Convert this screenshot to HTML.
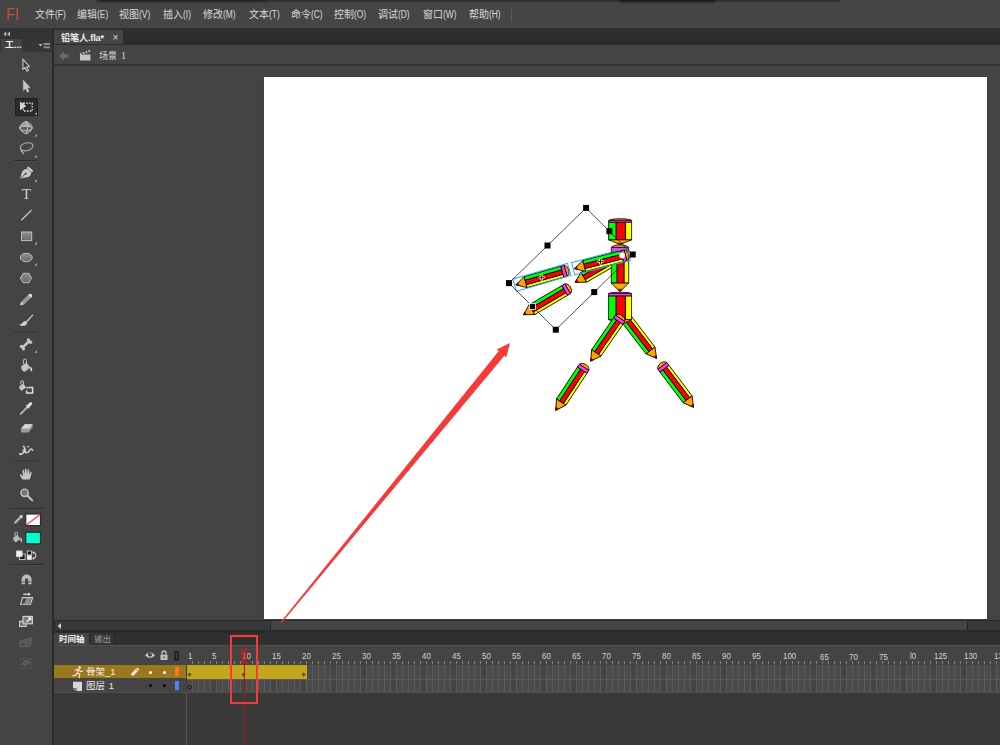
<!DOCTYPE html>
<html lang="zh-CN"><head><meta charset="utf-8"><title>铅笔人.fla</title>
<style>
html,body{margin:0;padding:0;}
body{width:1000px;height:745px;overflow:hidden;background:#444;position:relative;font-family:"Liberation Sans", "Noto Sans CJK SC", sans-serif;font-size:10px;color:#d6d6d6;}
.abs{position:absolute;}
.menu{position:absolute;left:0;top:0;width:1000px;height:29px;background:#454545;}
.menu span.mi{position:absolute;top:8px;height:14px;line-height:14px;font-size:10px;color:#dadada;white-space:nowrap;letter-spacing:0px;}
.menu span.mi i{font-style:normal;font-size:10px;display:inline-block;transform:scaleX(.84);transform-origin:0 50%;}
.fl{position:absolute;left:6px;top:4.9px;font-size:16.5px;line-height:18px;color:#c2512f;letter-spacing:0.3px;transform:scaleX(.9);transform-origin:0 0;}
.tabbar{position:absolute;left:54px;top:29px;width:946px;height:16px;background:linear-gradient(#2a2a2a 0,#2a2a2a 1px,#353535 1px,#353535 2px,#2d2d2d 2px,#2d2d2d 14px,#262626 14px);}
.doctab{position:absolute;left:54px;top:30px;width:69px;height:14px;background:#454545;}
.doctab .t{position:absolute;left:7px;top:1.8px;font-size:9.2px;letter-spacing:-0.2px;line-height:12px;font-weight:bold;color:#f0f0f0;white-space:nowrap;}
.doctab .x{position:absolute;left:58.5px;top:0.6px;font-size:10px;line-height:13px;color:#ddd;}
.scenebar{position:absolute;left:54px;top:45px;width:946px;height:19px;background:#444;}
.scenetxt{position:absolute;left:99px;top:49px;font-size:9px;line-height:13px;color:#dcdcdc;white-space:nowrap;}
.hline{position:absolute;background:#2b2b2b;}
.tools{position:absolute;left:0;top:29px;width:52px;height:716px;background:#444;}
.stage{position:absolute;left:264px;top:77px;width:723px;height:542px;background:#fff;box-shadow:0 0 1px #333;}
.tl-tabs{position:absolute;left:54px;top:633px;width:946px;height:13px;background:#2f2f2f;}
.tltab{position:absolute;top:633px;height:13px;font-size:8.5px;line-height:13px;white-space:nowrap;}
.layers{position:absolute;}
.num{position:absolute;top:650px;font-size:9.6px;line-height:11px;color:#d2d2d2;white-space:nowrap;transform:scaleX(.82);transform-origin:0 0;}
.lname{position:absolute;font-size:9.5px;line-height:13px;color:#f0f0f0;white-space:nowrap;}
</style></head>
<body>
<div class="menu">
<div class="abs" style="left:100px;top:0;width:740px;height:3px;background:linear-gradient(rgba(30,30,30,.75),rgba(30,30,30,0));"></div>
<div class="abs" style="left:620px;top:0;width:95px;height:4px;background:linear-gradient(rgba(25,25,25,.9),rgba(25,25,25,0));"></div>
<div class="abs" style="left:96px;top:0;width:170px;height:4px;background:linear-gradient(rgba(28,28,28,.5),rgba(28,28,28,0));"></div>
<div class="fl">Fl</div>
<span class="mi" style="left:35px;top:8px">文件<i>(F)</i></span>
<span class="mi" style="left:77px;top:8px">编辑<i>(E)</i></span>
<span class="mi" style="left:119px;top:8px">视图<i>(V)</i></span>
<span class="mi" style="left:163px;top:8px">插入<i>(I)</i></span>
<span class="mi" style="left:203px;top:8px">修改<i>(M)</i></span>
<span class="mi" style="left:249px;top:8px">文本<i>(T)</i></span>
<span class="mi" style="left:291px;top:8px">命令<i>(C)</i></span>
<span class="mi" style="left:334px;top:8px">控制<i>(O)</i></span>
<span class="mi" style="left:378px;top:8px">调试<i>(D)</i></span>
<span class="mi" style="left:423px;top:8px">窗口<i>(W)</i></span>
<span class="mi" style="left:469px;top:8px">帮助<i>(H)</i></span>
<div class="abs" style="left:511px;top:7px;width:1px;height:15px;background:#5a5a5a;"></div>
</div>
<div class="hline" style="left:0;top:28px;width:1000px;height:1px;background:#333"></div>
<div class="tabbar"></div>
<div class="doctab"><span class="t">铅笔人.fla*</span><span class="x">×</span></div>
<div class="hline" style="left:54px;top:44px;width:946px;height:1px;background:#2c2c2c"></div>
<div class="scenebar"></div>
<svg class="abs" style="left:58px;top:50px" width="12" height="12" viewBox="0 0 12 12"><path d="M1 6 L6 1.5 L6 4.3 L10.5 4.3 L10.5 7.7 L6 7.7 L6 10.5 Z" fill="#6b6b6b"/></svg>
<svg class="abs" style="left:78px;top:48px" width="14" height="14" viewBox="0 0 14 14"><rect x="2" y="6.5" width="10.5" height="6" fill="#c4c4c4"/><path d="M1.6 5.6 L11.8 2.0 L12.4 3.6 L2.2 7.2 Z" fill="#c4c4c4"/><path d="M3.6 4.6 l1.3 1.7 M6.3 3.6 l1.3 1.7 M9 2.7 l1.3 1.7" stroke="#444" stroke-width="1.1"/></svg>
<div class="scenetxt">场景&nbsp;<span style="font-family:&quot;Liberation Serif&quot;,serif;font-size:10px;margin-left:1.5px">1</span></div>
<div class="hline" style="left:54px;top:64px;width:946px;height:2px;background:linear-gradient(#303030,#3a3a3a)"></div>
<div class="stage"></div>
<div class="abs" style="left:54px;top:620px;width:946px;height:11px;background:#2a2a2a"></div>
<div class="abs" style="left:55px;top:621px;width:945px;height:9px;background:#383838"></div>
<div class="abs" style="left:270px;top:621px;width:698px;height:9px;background:#454545;border-left:1px solid #222;border-right:1px solid #222;box-sizing:border-box"></div>
<svg class="abs" style="left:56px;top:622px" width="8" height="8" viewBox="0 0 8 8"><path d="M1.5 4 L5 1 L5 7 Z" fill="#cfcfcf"/></svg>
<div class="abs" style="left:54px;top:631px;width:946px;height:2px;background:#2a2a2a"></div>
<div class="tools"></div>
<div class="abs" style="left:52px;top:29px;width:2px;height:716px;background:#2b2b2b"></div>
<div class="abs" style="left:0;top:29px;width:52px;height:10px;background:#333"></div>
<div class="abs" style="left:0;top:39px;width:52px;height:13px;background:#353535"></div>
<div class="abs" style="left:1px;top:39px;width:21px;height:13px;background:#444"></div>
<div class="abs" style="left:5px;top:40px;font-size:9px;line-height:11px;font-weight:bold;color:#eee;white-space:nowrap">工...</div>
<svg class="abs" style="left:3px;top:31px" width="8" height="6" viewBox="0 0 8 6"><path d="M0.5 3 L3.3 0.6 L3.3 5.4 Z M4.2 3 L7 0.6 L7 5.4 Z" fill="#bdbdbd"/></svg>
<svg class="abs" style="left:38px;top:42px" width="13" height="8" viewBox="0 0 13 8"><path d="M0.5 2 L4.5 2 L2.5 4.6 Z" fill="#bbb"/><rect x="5.5" y="1" width="6.5" height="2" fill="#8a8a8a"/><rect x="5.5" y="4.3" width="6.5" height="2" fill="#8a8a8a"/></svg>
<svg class="abs" style="left:0;top:0" width="54" height="745" viewBox="0 0 54 745">
<path d="M22.9 59.2 l0 10.2 l2.2 -2.0 l1.7 3.8 l1.6 -0.8 l-1.6 -3.6 l2.7 -0.2 Z" fill="#3a3a3a" stroke="#c6c6c6" stroke-width="1.1" stroke-linejoin="round"/>
<path d="M23.4 80.2 l0 10.2 l2.2 -2.0 l1.7 3.8 l1.6 -0.8 l-1.6 -3.6 l2.7 -0.2 Z" fill="#c6c6c6" stroke="#c6c6c6" stroke-width="0.6" stroke-linejoin="round"/>
<rect x="15.5" y="98.5" width="22" height="17" fill="#2b2b2b" stroke="#1f1f1f" stroke-width="1"/>
<rect x="23.4" y="103.2" width="8.8" height="7.8" fill="none" stroke="#e4e4e4" stroke-width="1.3" stroke-dasharray="1.6 1.3"/>
<path d="M20 101.6 l0 8.6 l6.4 -4.2 Z" fill="#d4d4d4"/>
<path d="M37.0 114.8 l0 -2.6 l-2.6 2.6 Z" fill="#b0b0b0"/>
<path d="M26 121.2 Q31.4 123.4 32.6 127.6 Q31.4 131.8 26 134 Q20.6 131.8 19.4 127.6 Q20.6 123.4 26 121.2 Z" fill="#5e5e5e" stroke="#c6c6c6" stroke-width="1"/>
<path d="M19.6 127 Q20.8 123.4 26 121.4 Q31.2 123.4 32.4 127 Z" fill="#9d9d9d"/>
<ellipse cx="26" cy="128.4" rx="6.2" ry="2.3" fill="none" stroke="#c6c6c6" stroke-width="0.9"/>
<path d="M26 121.4 Q29.4 127.6 26 133.8" fill="none" stroke="#c6c6c6" stroke-width="0.9"/>
<path d="M37.0 136.6 l0 -2.6 l-2.6 2.6 Z" fill="#b0b0b0"/>
<ellipse cx="26.6" cy="146.8" rx="6.4" ry="3.9" transform="rotate(-14 26.6 146.8)" fill="none" stroke="#b0b0b0" stroke-width="1.1"/>
<path d="M21.4 149.6 q-0.8 1.6 0.8 2.2 q1.6 0.4 0.8 2.4" fill="none" stroke="#bdbdbd" stroke-width="1.1"/>
<path d="M37.0 157.6 l0 -2.6 l-2.6 2.6 Z" fill="#b0b0b0"/>
<path d="M14 160.5 H38" stroke="#2c2c2c" stroke-width="1"/><path d="M14 161.5 H38" stroke="#4c4c4c" stroke-width="1"/>
<path d="M20.1 178.5 L22.2 171.4 Q24.6 168.4 27.4 168.8 L31.4 172.4 Q31.4 175.2 28.6 177 Z" fill="#c6c6c6"/>
<path d="M28.2 166.4 L33.3 170.8 L32 172.3 L26.9 167.9 Z" fill="#dcdcdc"/>
<circle cx="25.6" cy="173.8" r="1" fill="#333"/><path d="M20.4 178.2 L25.2 174.2" stroke="#444" stroke-width="0.7"/>
<path d="M37.0 181.8 l0 -2.6 l-2.6 2.6 Z" fill="#b0b0b0"/>
<text x="26.4" y="199" font-family="'Liberation Serif', serif" font-size="15.2" fill="#cfcfcf" text-anchor="middle">T</text>
<path d="M21.2 220.3 L31.6 210" stroke="#cacaca" stroke-width="1.2"/>
<linearGradient id="rg" x1="0" y1="0" x2="0" y2="1"><stop offset="0" stop-color="#8e8e8e"/><stop offset="1" stop-color="#6a6a6a"/></linearGradient>
<rect x="21.5" y="232" width="10.2" height="8.6" fill="url(#rg)" stroke="#bdbdbd" stroke-width="1"/>
<path d="M37.0 244.4 l0 -2.6 l-2.6 2.6 Z" fill="#b0b0b0"/>
<ellipse cx="26.3" cy="257.5" rx="6" ry="4.2" fill="url(#rg)" stroke="#bdbdbd" stroke-width="1"/>
<path d="M37.0 265.6 l0 -2.6 l-2.6 2.6 Z" fill="#b0b0b0"/>
<path d="M20.4 278 L23.2 273.3 L28.8 273.3 L31.6 278 L28.8 282.7 L23.2 282.7 Z" fill="url(#rg)" stroke="#bdbdbd" stroke-width="1"/>
<path d="M20 305.2 L21.2 301.8 L28.6 294.6 L31.4 297.4 L24 304.4 Z" fill="#9a9a9a"/>
<path d="M28.2 295 Q30.2 292.8 31.8 294.4 Q33.2 296 31.2 297.8 Z" fill="#dedede"/>
<path d="M20 305.2 L21.2 301.8 L23.6 304.2 Z" fill="#d8d8d8"/>
<path d="M26 321.6 L32.6 314.2 L33.4 315 L27 322.6 Z" fill="#cfcfcf"/>
<path d="M19.4 324.4 Q22.4 324 23.6 321.6 Q25.4 320.4 27 322 Q27.6 325.6 23.2 326 Q20.6 326 19.4 324.4 Z" fill="#cfcfcf"/>
<path d="M14 332.3 H38" stroke="#2c2c2c" stroke-width="1"/><path d="M14 333.3 H38" stroke="#4c4c4c" stroke-width="1"/>
<path d="M22.6 347.4 L29.2 341.2" stroke="#c6c6c6" stroke-width="2.6" stroke-linecap="round"/>
<circle cx="21.4" cy="346.4" r="1.7" fill="#c6c6c6"/><circle cx="23.4" cy="348.8" r="1.7" fill="#c6c6c6"/>
<circle cx="28.4" cy="340" r="1.7" fill="#c6c6c6"/><circle cx="30.6" cy="342.2" r="1.7" fill="#c6c6c6"/>
<path d="M37.0 352.8 l0 -2.6 l-2.6 2.6 Z" fill="#b0b0b0"/>
<path d="M21 366.6 L26.4 362.6 L30.2 367.8 L24.8 371.8 Q21.4 371.4 21 366.6 Z" fill="#c6c6c6"/>
<path d="M23.4 364 V360.6 a1.5 1.5 0 0 1 3 0 V364" fill="none" stroke="#c6c6c6" stroke-width="1"/>
<path d="M29.6 366.4 Q32.6 367 32.2 371.2 Q30.4 371.6 30.4 369.4 Z" fill="#dadada"/>
<path d="M19 386.4 L23.2 383.4 L26.2 387.4 L22 390.6 Q19.4 390 19 386.4 Z" fill="#c6c6c6"/>
<path d="M20.8 384.4 V382 a1.3 1.3 0 0 1 2.6 0 V384" fill="none" stroke="#c6c6c6" stroke-width="1"/>
<path d="M26.4 387 l1.6 1.6" stroke="#c6c6c6" stroke-width="1.4"/>
<path d="M28.4 387.4 H32.6 V393 H26.6 V390.6" fill="none" stroke="#e0e0e0" stroke-width="1.5"/>
<path d="M20.7 413.8 L27.4 407" stroke="#b4b4b4" stroke-width="1.9" stroke-linecap="round"/>
<path d="M26.3 405.2 L29.2 408.1" stroke="#d8d8d8" stroke-width="1.5"/>
<path d="M28.7 405.7 L30.7 403.7" stroke="#d8d8d8" stroke-width="3.1" stroke-linecap="round"/>
<path d="M21 428.6 L24.8 424.2 L32.6 424.2 L32.6 427.2 L28.6 432.4 L21 432.4 Z" fill="#9c9c9c"/>
<path d="M21 428.6 L24.8 424.2 L32.6 424.2 L28.8 428.6 Z" fill="#d8d8d8"/>
<path d="M19.6 454.2 Q23.6 454.2 24.6 450.6 Q25.6 446.6 22.6 446.2 M24.4 451.4 Q27.6 454.4 29.6 450.4 Q30.8 447.6 33 450.8" fill="none" stroke="#c6c6c6" stroke-width="1.6"/>
<circle cx="24.4" cy="450.6" r="1.5" fill="none" stroke="#e0e0e0" stroke-width="0.9"/><circle cx="20.2" cy="454" r="1" fill="#dcdcdc"/><circle cx="28" cy="446.6" r="0.9" fill="#cfcfcf"/>
<path d="M14 461.3 H38" stroke="#2c2c2c" stroke-width="1"/><path d="M14 462.3 H38" stroke="#4c4c4c" stroke-width="1"/>
<path d="M22.4 479.6 L20 475.4 Q19.8 474 21.2 474.4 L23 476.2 L22.4 470.4 Q23.2 469.2 23.9 470.4 L24.6 474.2 L25 469.2 Q25.9 468 26.6 469.2 L26.8 474.2 L27.8 469.8 Q28.8 468.8 29.3 470 L29 474.8 L30.4 472 Q31.6 471.2 31.6 472.6 L30.6 477.2 Q30.2 479 29.2 479.6 Z" fill="#c6c6c6"/>
<circle cx="24.6" cy="492.8" r="3.7" fill="#777" stroke="#c6c6c6" stroke-width="1.4"/>
<path d="M27.6 495.8 L32.2 500.4" stroke="#c6c6c6" stroke-width="2" stroke-linecap="round"/>
<path d="M9 508.6 H44" stroke="#2c2c2c" stroke-width="1"/><path d="M9 509.6 H44" stroke="#4c4c4c" stroke-width="1"/>
<path d="M13.8 523.8 L14.6 521.6 L19.6 516.6 L21.2 518.2 L16.2 523.2 Z" fill="#b4b4b4"/><path d="M19.4 516.2 Q21 514.2 22.4 515.6 Q23.6 517 21.6 518.6 Z" fill="#e0e0e0"/>
<rect x="25.7" y="514" width="14.8" height="11.6" fill="#fff" stroke="#2a2a2a" stroke-width="1.2"/>
<path d="M26.6 524.8 L39.8 514.8" stroke="#ff4040" stroke-width="1.1"/>
<path d="M13 537.8 L17.2 534.8 L20.4 539 L16 542.2 Q13.4 541.6 13 537.8 Z" fill="#b8b8b8"/>
<path d="M15 536 V533.4 a1.3 1.3 0 0 1 2.6 0 V535.6" fill="none" stroke="#b8b8b8" stroke-width="1"/>
<path d="M20 537.6 Q22.4 538.2 22 542 Q20.6 542.2 20.6 540.4 Z" fill="#d8d8d8"/>
<rect x="25.7" y="532.2" width="14.8" height="11.6" fill="#00ffcc" stroke="#2a2a2a" stroke-width="1.2"/>
<rect x="19.5" y="554" width="5.6" height="5.6" fill="#1a1a1a" stroke="#d0d0d0" stroke-width="0.9"/>
<rect x="16.5" y="551" width="5.6" height="5.6" fill="#f0f0f0" stroke="#d0d0d0" stroke-width="0.9"/>
<rect x="27.3" y="551" width="4" height="4" fill="#111" stroke="#ddd" stroke-width="0.8"/><rect x="27.3" y="555.6" width="4" height="4" fill="#f4f4f4" stroke="#ddd" stroke-width="0.8"/>
<path d="M33 552.6 Q36 552.6 35.6 555.6 Q36 558.4 33 558.4" fill="none" stroke="#d4d4d4" stroke-width="1.1"/><path d="M33.8 550.8 L32.2 552.6 L33.8 554.2 Z M33.8 556.8 L32.2 558.4 L33.8 560 Z" fill="#d4d4d4"/>
<path d="M9 564.5 H44" stroke="#2c2c2c" stroke-width="1"/><path d="M9 565.5 H44" stroke="#4c4c4c" stroke-width="1"/>
<path d="M21.6 584.2 V579.6 a5 5 0 0 1 10 0 V584.2 H28.2 V579.8 a1.6 1.6 0 0 0 -3.2 0 V584.2 Z" fill="#bcbcbc"/>
<path d="M21.6 582 H25 M28.2 582 H31.6" stroke="#444" stroke-width="0.9"/>
<path d="M20.6 604.2 L22.6 597.6 H32.6 L30.6 604.2 Z" fill="none" stroke="#cfcfcf" stroke-width="1.1"/><path d="M24 604 L26.6 598 H31.6 L29.6 604 Z" fill="#8c8c8c"/>
<path d="M23.2 594.2 H29.4" stroke="#e0e0e0" stroke-width="1.2"/><path d="M28.4 592.4 L30.8 594.2 L28.4 596 Z" fill="#e0e0e0"/>
<rect x="19.6" y="621.4" width="6.6" height="5" fill="#6a6a6a" stroke="#d4d4d4" stroke-width="1.1"/>
<rect x="23" y="616.4" width="9.4" height="7.4" fill="#7c7c7c" stroke="#d4d4d4" stroke-width="1.1"/>
<path d="M26.4 622 L30.6 618 M28 617.8 H30.8 V620.6" fill="none" stroke="#f0f0f0" stroke-width="1.1"/>
<path d="M20.2 646.6 V641 L31.8 637.4 L30.6 646.6 Z" fill="#555" stroke="#636363" stroke-width="0.9"/><rect x="20.6" y="642.6" width="5.4" height="3.8" fill="#4a4a4a" stroke="#6a6a6a" stroke-width="0.8"/>
<rect x="20.4" y="658.4" width="11.4" height="10" fill="none" stroke="#646464" stroke-width="0.9" stroke-dasharray="1.2 1.2"/>
<path d="M23 664.6 Q22.4 660.6 26.4 660.4 Q30 660.6 29.8 663 Q27.4 662.6 26.8 664.6 Q25.2 666.6 23 664.6 Z" fill="#555" stroke="#6e6e6e" stroke-width="0.9"/>
</svg>
<div class="abs" style="left:54px;top:633px;width:946px;height:112px;background:#393939"></div>
<div class="tl-tabs"></div>
<div class="abs" style="left:54px;top:633px;width:35px;height:13px;background:#444"></div>
<div class="abs" style="left:89px;top:633px;width:26px;height:12px;background:#343434;border-right:1px solid #282828;border-left:1px solid #282828;box-sizing:border-box"></div>
<div class="tltab" style="left:59px;color:#f2f2f2;font-weight:bold;">时间轴</div>
<div class="tltab" style="left:94px;color:#9a9a9a;">输出</div>
<div class="abs" style="left:54px;top:646px;width:946px;height:19px;background:#444"></div>
<div class="abs" style="left:54px;top:665px;width:133px;height:13px;background:#9b771d"></div>
<div class="abs" style="left:54px;top:678px;width:133px;height:14px;background:#454545"></div>
<div class="abs" style="left:187px;top:665px;width:813px;height:28px;background:#4b4b4b"></div>
<div class="abs" style="left:187px;top:665px;width:813px;height:27px;background:repeating-linear-gradient(90deg,rgba(0,0,0,0) 0,rgba(0,0,0,0) 5px,#5b5b5b 5px,#5b5b5b 6px)"></div>
<div class="abs" style="left:187px;top:665px;width:813px;height:27px;background:repeating-linear-gradient(90deg,rgba(0,0,0,0) 0,rgba(0,0,0,0) 24px,rgba(0,0,0,.09) 24px,rgba(0,0,0,.09) 29px,rgba(0,0,0,0) 29px,rgba(0,0,0,0) 30px)"></div>
<div class="abs" style="left:187px;top:679px;width:813px;height:1px;background:#5b5b5b"></div>
<div class="abs" style="left:54px;top:692px;width:946px;height:1px;background:#4e4e4e"></div>
<div class="abs" style="left:54px;top:645px;width:946px;height:1px;background:#505050"></div>
<div class="abs" style="left:187px;top:665px;width:120px;height:14px;background:#c3a520"></div>
<div class="abs" style="left:186px;top:646px;width:1px;height:19px;background:#4a4a4a"></div>
<div class="abs" style="left:186px;top:665px;width:1px;height:27px;background:#3c3c3c"></div>
<div class="abs" style="left:186px;top:692px;width:1px;height:53px;background:#575757"></div>
<svg class="abs" style="left:0;top:0" width="1000" height="745" viewBox="0 0 1000 745">
<path d="M192.5 661.5V663.5M198.5 661.5V663.5M204.5 661.5V663.5M210.5 661.5V663.5M216.5 661.5V663.5M222.5 661.5V663.5M228.5 661.5V663.5M234.5 661.5V663.5M240.5 661.5V663.5M246.5 661.5V663.5M252.5 661.5V663.5M258.5 661.5V663.5M264.5 661.5V663.5M270.5 661.5V663.5M276.5 661.5V663.5M282.5 661.5V663.5M288.5 661.5V663.5M294.5 661.5V663.5M300.5 661.5V663.5M306.5 661.5V663.5M312.5 661.5V663.5M318.5 661.5V663.5M324.5 661.5V663.5M330.5 661.5V663.5M336.5 661.5V663.5M342.5 661.5V663.5M348.5 661.5V663.5M354.5 661.5V663.5M360.5 661.5V663.5M366.5 661.5V663.5M372.5 661.5V663.5M378.5 661.5V663.5M384.5 661.5V663.5M390.5 661.5V663.5M396.5 661.5V663.5M402.5 661.5V663.5M408.5 661.5V663.5M414.5 661.5V663.5M420.5 661.5V663.5M426.5 661.5V663.5M432.5 661.5V663.5M438.5 661.5V663.5M444.5 661.5V663.5M450.5 661.5V663.5M456.5 661.5V663.5M462.5 661.5V663.5M468.5 661.5V663.5M474.5 661.5V663.5M480.5 661.5V663.5M486.5 661.5V663.5M492.5 661.5V663.5M498.5 661.5V663.5M504.5 661.5V663.5M510.5 661.5V663.5M516.5 661.5V663.5M522.5 661.5V663.5M528.5 661.5V663.5M534.5 661.5V663.5M540.5 661.5V663.5M546.5 661.5V663.5M552.5 661.5V663.5M558.5 661.5V663.5M564.5 661.5V663.5M570.5 661.5V663.5M576.5 661.5V663.5M582.5 661.5V663.5M588.5 661.5V663.5M594.5 661.5V663.5M600.5 661.5V663.5M606.5 661.5V663.5M612.5 661.5V663.5M618.5 661.5V663.5M624.5 661.5V663.5M630.5 661.5V663.5M636.5 661.5V663.5M642.5 661.5V663.5M648.5 661.5V663.5M654.5 661.5V663.5M660.5 661.5V663.5M666.5 661.5V663.5M672.5 661.5V663.5M678.5 661.5V663.5M684.5 661.5V663.5M690.5 661.5V663.5M696.5 661.5V663.5M702.5 661.5V663.5M708.5 661.5V663.5M714.5 661.5V663.5M720.5 661.5V663.5M726.5 661.5V663.5M732.5 661.5V663.5M738.5 661.5V663.5M744.5 661.5V663.5M750.5 661.5V663.5M756.5 661.5V663.5M762.5 661.5V663.5M768.5 661.5V663.5M774.5 661.5V663.5M780.5 661.5V663.5M786.5 661.5V663.5M792.5 661.5V663.5M798.5 661.5V663.5M804.5 661.5V663.5M810.5 661.5V663.5M816.5 661.5V663.5M822.5 661.5V663.5M828.5 661.5V663.5M834.5 661.5V663.5M840.5 661.5V663.5M846.5 661.5V663.5M852.5 661.5V663.5M858.5 661.5V663.5M864.5 661.5V663.5M870.5 661.5V663.5M876.5 661.5V663.5M882.5 661.5V663.5M888.5 661.5V663.5M894.5 661.5V663.5M900.5 661.5V663.5M906.5 661.5V663.5M912.5 661.5V663.5M918.5 661.5V663.5M924.5 661.5V663.5M930.5 661.5V663.5M936.5 661.5V663.5M942.5 661.5V663.5M948.5 661.5V663.5M954.5 661.5V663.5M960.5 661.5V663.5M966.5 661.5V663.5M972.5 661.5V663.5M978.5 661.5V663.5M984.5 661.5V663.5M990.5 661.5V663.5M996.5 661.5V663.5M1002.5 661.5V663.5" stroke="#9c9c9c" stroke-width="1" fill="none"/>
<path d="M189.5 672.4 l2 2.2 l-2 2.2 l-2 -2.2 Z" fill="#6b4a12"/>
<path d="M243.5 672.4 l2 2.2 l-2 2.2 l-2 -2.2 Z" fill="#6b4a12"/>
<path d="M303.6 672.4 l2 2.2 l-2 2.2 l-2 -2.2 Z" fill="#6b4a12"/>
<circle cx="189.6" cy="687.3" r="1.8" fill="none" stroke="#151515" stroke-width="1"/>
</svg>
<span class="num" style="left:187.5px">1</span>
<span class="num" style="left:211.5px">5</span>
<span class="num" style="left:241.5px">10</span>
<span class="num" style="left:271.5px">15</span>
<span class="num" style="left:301.5px">20</span>
<span class="num" style="left:331.5px">25</span>
<span class="num" style="left:361.5px">30</span>
<span class="num" style="left:391.5px">35</span>
<span class="num" style="left:421.5px">40</span>
<span class="num" style="left:451.5px">45</span>
<span class="num" style="left:481.5px">50</span>
<span class="num" style="left:511.5px">55</span>
<span class="num" style="left:541.5px">60</span>
<span class="num" style="left:571.5px">65</span>
<span class="num" style="left:601.5px">70</span>
<span class="num" style="left:631.5px">75</span>
<span class="num" style="left:661.5px">80</span>
<span class="num" style="left:691.5px">85</span>
<span class="num" style="left:721.5px">90</span>
<span class="num" style="left:751.5px">95</span>
<span class="num" style="left:783.2px">100</span>
<span class="num" style="left:819.5px;top:651px">65</span>
<span class="num" style="left:849.2px;top:651px">70</span>
<span class="num" style="left:879.2px;top:651px">75</span>
<span class="num" style="left:909.5px">l0</span>
<span class="num" style="left:934.0px">125</span>
<span class="num" style="left:963.8px">130</span>
<span class="num" style="left:994.3px">135</span>
<svg class="abs" style="left:140px;top:648px" width="46" height="14" viewBox="0 0 46 14"><path d="M5 7.3 Q10 1.2 15.2 7.3 Q10 12.6 5 7.3 Z" fill="#bdbdbd"/><path d="M6.6 7.3 Q10 3.6 13.6 7.3 Q10 10.6 6.6 7.3 Z" fill="#d8d8d8"/><circle cx="10.1" cy="6.6" r="2.1" fill="#3a3a3a"/><circle cx="10.9" cy="5.9" r="0.7" fill="#c8c8c8"/><rect x="20.5" y="6.7" width="7" height="5.3" fill="#c2c2c2"/><path d="M22 6.7 V5 a2 2 0 0 1 4 0 V6.7" fill="none" stroke="#c2c2c2" stroke-width="1.3"/><rect x="23.4" y="8.3" width="1.2" height="2" fill="#444"/><rect x="35" y="3.8" width="3" height="8" fill="none" stroke="#111" stroke-width="1.2"/></svg>
<svg class="abs" style="left:71px;top:665px" width="14" height="14" viewBox="0 0 14 14"><circle cx="8.6" cy="2.6" r="1.3" fill="#f4ead0"/><path d="M4.2 5.2 L7.6 4.4 L6.4 8 L8.8 9.6 L8.2 12.6 M6.4 8 L4.6 10.2 L2 10.8 M7.6 4.4 L9.6 6.6 L11.6 6.2" fill="none" stroke="#f4ead0" stroke-width="1.2" stroke-linecap="round" stroke-linejoin="round"/></svg>
<div class="lname" style="left:86px;top:665px;">骨架_1</div>
<svg class="abs" style="left:129px;top:666px" width="12" height="12" viewBox="0 0 12 12"><path d="M1.2 10.8 L2.2 7.6 L8.2 1.6 L10.4 3.8 L4.4 9.8 Z" fill="#efe6cf"/><path d="M7 2.8 L9.2 5" stroke="#9b771d" stroke-width="0.9"/><path d="M1.2 10.8 L2 8.6 L3.4 10 Z" fill="#5a4410"/></svg>
<div class="abs" style="left:148.5px;top:670.5px;width:3.2px;height:3.2px;border-radius:2px;background:#fff"></div>
<div class="abs" style="left:163px;top:670.5px;width:3.2px;height:3.2px;border-radius:2px;background:#fff"></div>
<div class="abs" style="left:175px;top:667px;width:4px;height:9px;background:#ff7a00"></div>
<svg class="abs" style="left:72px;top:681px" width="12" height="11" viewBox="0 0 12 11"><path d="M1 0.8 H10 V10 H4.6 V7.2 H1 Z" fill="#d8d8d8"/><path d="M1 7.8 H4 V10 Z" fill="#d8d8d8" opacity=".55"/></svg>
<div class="lname" style="left:86px;top:679px;color:#eaeaea">图层&nbsp;<span style="margin-left:1px">1</span></div>
<div class="abs" style="left:148.5px;top:684px;width:3.2px;height:3.2px;border-radius:2px;background:#0a0a0a"></div>
<div class="abs" style="left:163px;top:684px;width:3.2px;height:3.2px;border-radius:2px;background:#0a0a0a"></div>
<div class="abs" style="left:175px;top:681px;width:4px;height:9px;background:#4f80ff"></div>
<div class="abs" style="left:241px;top:648px;width:6px;height:16px;background:rgba(200,30,30,.55);border:1px solid #b02020;box-sizing:border-box"></div>
<div class="abs" style="left:243.5px;top:664px;width:1px;height:81px;background:#a81818"></div>
<div class="abs" style="left:230px;top:635px;width:28px;height:69px;border:2px solid #f23c3c;box-sizing:border-box"></div>
<svg class="abs" style="left:0;top:0" width="1000" height="745" viewBox="0 0 1000 745">
<g transform="translate(623.10 314.80) rotate(52.46)" stroke="#000" stroke-width="0.80" stroke-linejoin="round"><path d="M3.40 -5.42 C-1.12 -5.09 -1.12 5.09 3.40 5.42 Z" fill="#ffa500"/><rect x="3.20" y="-5.65" width="3.60" height="11.30" fill="#ff33ff"/><rect x="6.80" y="-5.65" width="38.19" height="3.05" fill="#ffff00"/><rect x="6.80" y="-2.60" width="38.19" height="4.63" fill="#ff0000"/><rect x="6.80" y="2.03" width="38.19" height="3.62" fill="#00ff00"/><path d="M44.99 -5.65 L54.98 0 L44.99 5.65 Z" fill="#ffa500"/><path d="M52.28 -1.53 L54.98 0 L52.28 1.53 Z" fill="#cc0000" stroke-width="0.48"/></g>
<g transform="translate(620.05 292.20) rotate(90.00)" stroke="#000" stroke-width="0.80" stroke-linejoin="round"><path d="M1.37 -11.04 C-0.41 -10.35 -0.41 10.35 1.37 11.04 Z" fill="#ffa500"/><rect x="1.17" y="-11.50" width="2.73" height="23.00" fill="#ff33ff"/><rect x="3.90" y="-11.50" width="23.43" height="6.21" fill="#ffff00"/><rect x="3.90" y="-5.29" width="23.43" height="9.43" fill="#ff0000"/><rect x="3.90" y="4.14" width="23.43" height="7.36" fill="#00ff00"/><path d="M27.33 -11.50 L33.40 0 L27.33 11.50 Z" fill="#ffa500"/><path d="M31.76 -3.10 L33.40 0 L31.76 3.10 Z" fill="#cc0000" stroke-width="0.48"/></g>
<g transform="translate(622.00 315.60) rotate(124.55)" stroke="#000" stroke-width="0.80" stroke-linejoin="round"><path d="M3.42 -5.42 C-1.13 -5.09 -1.13 5.09 3.42 5.42 Z" fill="#ffa500"/><rect x="3.22" y="-5.65" width="3.62" height="11.30" fill="#ff33ff"/><rect x="6.85" y="-5.65" width="38.45" height="3.05" fill="#ffff00"/><rect x="6.85" y="-2.60" width="38.45" height="4.63" fill="#ff0000"/><rect x="6.85" y="2.03" width="38.45" height="3.62" fill="#00ff00"/><path d="M45.30 -5.65 L55.37 0 L45.30 5.65 Z" fill="#ffa500"/><path d="M52.65 -1.53 L55.37 0 L52.65 1.53 Z" fill="#cc0000" stroke-width="0.48"/></g>
<g transform="translate(585.90 364.60) rotate(123.40)" stroke="#000" stroke-width="0.80" stroke-linejoin="round"><path d="M3.39 -5.42 C-1.12 -5.09 -1.12 5.09 3.39 5.42 Z" fill="#ffa500"/><rect x="3.19" y="-5.65" width="3.59" height="11.30" fill="#ff33ff"/><rect x="6.78" y="-5.65" width="38.10" height="3.05" fill="#ffff00"/><rect x="6.78" y="-2.60" width="38.10" height="4.63" fill="#ff0000"/><rect x="6.78" y="2.03" width="38.10" height="3.62" fill="#00ff00"/><path d="M44.89 -5.65 L54.86 0 L44.89 5.65 Z" fill="#ffa500"/><path d="M52.17 -1.53 L54.86 0 L52.17 1.53 Z" fill="#cc0000" stroke-width="0.48"/></g>
<g transform="translate(660.40 363.30) rotate(52.96)" stroke="#000" stroke-width="0.80" stroke-linejoin="round"><path d="M3.41 -5.42 C-1.12 -5.09 -1.12 5.09 3.41 5.42 Z" fill="#ffa500"/><rect x="3.21" y="-5.65" width="3.61" height="11.30" fill="#ff33ff"/><rect x="6.81" y="-5.65" width="38.28" height="3.05" fill="#ffff00"/><rect x="6.81" y="-2.60" width="38.28" height="4.63" fill="#ff0000"/><rect x="6.81" y="2.03" width="38.28" height="3.62" fill="#00ff00"/><path d="M45.10 -5.65 L55.12 0 L45.10 5.65 Z" fill="#ffa500"/><path d="M52.41 -1.53 L55.12 0 L52.41 1.53 Z" fill="#cc0000" stroke-width="0.48"/></g>
<g transform="translate(622.70 254.80) rotate(149.98)" stroke="#000" stroke-width="0.80" stroke-linejoin="round"><path d="M3.40 -5.42 C-1.12 -5.09 -1.12 5.09 3.40 5.42 Z" fill="#ffa500"/><rect x="3.20" y="-5.65" width="3.60" height="11.30" fill="#ff33ff"/><rect x="6.80" y="-5.65" width="38.18" height="3.05" fill="#ffff00"/><rect x="6.80" y="-2.60" width="38.18" height="4.63" fill="#ff0000"/><rect x="6.80" y="2.03" width="38.18" height="3.62" fill="#00ff00"/><path d="M44.98 -5.65 L54.97 0 L44.98 5.65 Z" fill="#ffa500"/><path d="M52.27 -1.53 L54.97 0 L52.27 1.53 Z" fill="#cc0000" stroke-width="0.48"/></g>
<g transform="translate(570.40 287.10) rotate(149.58)" stroke="#000" stroke-width="0.80" stroke-linejoin="round"><path d="M3.37 -5.42 C-1.11 -5.09 -1.11 5.09 3.37 5.42 Z" fill="#ffa500"/><rect x="3.17" y="-5.65" width="3.57" height="11.30" fill="#ff33ff"/><rect x="6.74" y="-5.65" width="37.86" height="3.05" fill="#ffff00"/><rect x="6.74" y="-2.60" width="37.86" height="4.63" fill="#ff0000"/><rect x="6.74" y="2.03" width="37.86" height="3.62" fill="#00ff00"/><path d="M44.59 -5.65 L54.50 0 L44.59 5.65 Z" fill="#ffa500"/><path d="M51.83 -1.53 L54.50 0 L51.83 1.53 Z" fill="#cc0000" stroke-width="0.48"/></g>
<g transform="translate(620.00 244.80) rotate(90.00)" stroke="#000" stroke-width="0.80" stroke-linejoin="round"><path d="M2.71 -8.35 C-0.88 -7.83 -0.88 7.83 2.71 8.35 Z" fill="#ffa500"/><rect x="2.51" y="-8.70" width="4.29" height="17.40" fill="#ff33ff"/><rect x="6.79" y="-8.70" width="31.50" height="4.70" fill="#ffff00"/><rect x="6.79" y="-4.00" width="31.50" height="7.13" fill="#ff0000"/><rect x="6.79" y="3.13" width="31.50" height="5.57" fill="#00ff00"/><path d="M38.29 -8.70 L46.80 0 L38.29 8.70 Z" fill="#ffa500"/><path d="M44.50 -2.35 L46.80 0 L44.50 2.35 Z" fill="#cc0000" stroke-width="0.48"/></g>
<g transform="translate(620.10 218.70) rotate(90.00)" stroke="#000" stroke-width="0.80" stroke-linejoin="round"><path d="M1.78 -11.04 C-0.55 -10.35 -0.55 10.35 1.78 11.04 Z" fill="#ffa500"/><rect x="1.58" y="-11.50" width="2.03" height="23.00" fill="#ff33ff"/><rect x="3.60" y="-11.50" width="17.51" height="6.21" fill="#ffff00"/><rect x="3.60" y="-5.29" width="17.51" height="9.43" fill="#ff0000"/><rect x="3.60" y="4.14" width="17.51" height="7.36" fill="#00ff00"/><path d="M21.11 -11.50 L25.80 0 L21.11 11.50 Z" fill="#ffa500"/><path d="M24.53 -3.11 L25.80 0 L24.53 3.11 Z" fill="#cc0000" stroke-width="0.48"/></g>
<g transform="translate(628.70 254.50) rotate(165.47)" stroke="#000" stroke-width="0.80" stroke-linejoin="round"><path d="M3.47 -5.42 C-1.14 -5.09 -1.14 5.09 3.47 5.42 Z" fill="#ffa500"/><rect x="3.27" y="-5.65" width="3.68" height="11.30" fill="#ff33ff"/><rect x="6.95" y="-5.65" width="39.03" height="3.05" fill="#ffff00"/><rect x="6.95" y="-2.60" width="39.03" height="4.63" fill="#ff0000"/><rect x="6.95" y="2.03" width="39.03" height="3.62" fill="#00ff00"/><path d="M45.98 -5.65 L56.20 0 L45.98 5.65 Z" fill="#ffa500"/><path d="M53.44 -1.53 L56.20 0 L53.44 1.53 Z" fill="#cc0000" stroke-width="0.48"/></g>
<g transform="translate(568.70 269.90) rotate(164.14)" stroke="#000" stroke-width="0.80" stroke-linejoin="round"><path d="M3.39 -5.42 C-1.12 -5.09 -1.12 5.09 3.39 5.42 Z" fill="#ffa500"/><rect x="3.19" y="-5.65" width="3.59" height="11.30" fill="#ff33ff"/><rect x="6.79" y="-5.65" width="38.12" height="3.05" fill="#ffff00"/><rect x="6.79" y="-2.60" width="38.12" height="4.63" fill="#ff0000"/><rect x="6.79" y="2.03" width="38.12" height="3.62" fill="#00ff00"/><path d="M44.91 -5.65 L54.89 0 L44.91 5.65 Z" fill="#ffa500"/><path d="M52.19 -1.53 L54.89 0 L52.19 1.53 Z" fill="#cc0000" stroke-width="0.48"/></g>
<rect x="-28.40" y="-6.30" width="56.80" height="12.60" transform="translate(541.90 277.30) rotate(-16.20)" fill="none" stroke="#2fa8ff" stroke-width="1"/>
<rect x="-28.75" y="-6.30" width="57.50" height="12.60" transform="translate(601.00 261.40) rotate(-14.70)" fill="none" stroke="#2fa8ff" stroke-width="1"/>
<path d="M586.1 207.9 L632.7 254.5 L555.8 329.7 L509.0 283.1 Z" fill="none" stroke="#222" stroke-width="0.8"/>
<rect x="583.1" y="204.9" width="6" height="6" fill="#000"/>
<rect x="506.0" y="280.1" width="6" height="6" fill="#000"/>
<rect x="552.8" y="326.7" width="6" height="6" fill="#000"/>
<rect x="629.7" y="251.5" width="6" height="6" fill="#000"/>
<rect x="544.5" y="242.5" width="6" height="6" fill="#000"/>
<rect x="606.4" y="228.2" width="6" height="6" fill="#000"/>
<rect x="591.2" y="289.1" width="6" height="6" fill="#000"/>
<rect x="529.4" y="303.4" width="6" height="6" fill="#000"/>
<rect x="529.5" y="303.4" width="6" height="6" fill="#000" stroke="#fff" stroke-width="0.8"/>
<circle cx="622.1" cy="255.4" r="2.8" fill="#fff" stroke="#ddd" stroke-width="0.4"/>
<path d="M597.5 261.4 h6 M600.5 258.4 v6" stroke="#fff" stroke-width="2.4" fill="none"/>
<path d="M598.0 261.4 h5 M600.5 258.9 v5" stroke="#111" stroke-width="0.9" fill="none"/>
<path d="M538.7 277.4 h6 M541.7 274.4 v6" stroke="#fff" stroke-width="2.4" fill="none"/>
<path d="M539.2 277.4 h5 M541.7 274.9 v5" stroke="#111" stroke-width="0.9" fill="none"/>
<path d="M281.7 622.9 L504.5 355.6 L506.2 357.4 L510.0 343.0 L496.7 349.5 L498.8 350.9 L280.7 622.1 Z" fill="#f93838"/>
</svg>
</body></html>
